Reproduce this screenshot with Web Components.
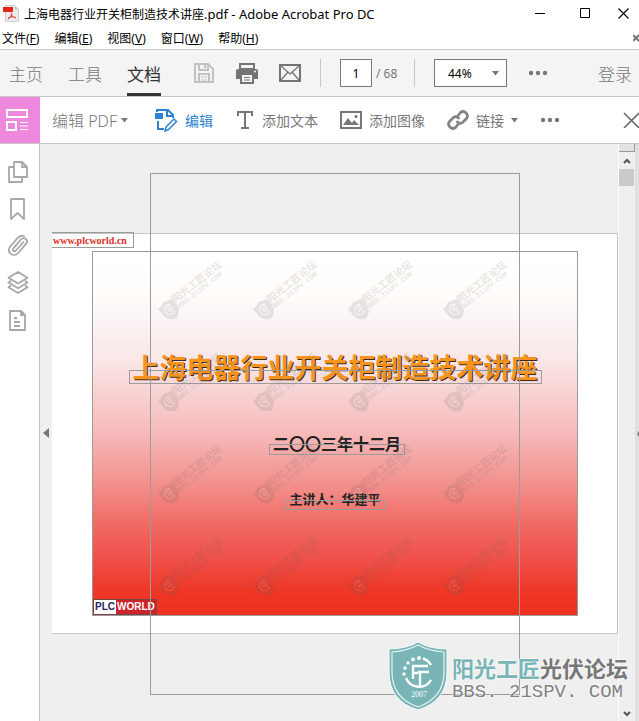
<!DOCTYPE html>
<html lang="zh-CN">
<head>
<meta charset="utf-8">
<title>上海电器行业开关柜制造技术讲座.pdf - Adobe Acrobat Pro DC</title>
<style>
html,body{margin:0;height:100%}
body{font-family:"Noto Sans","Noto Sans CJK SC",sans-serif;font-size:12px;color:#000;background:#fff;overflow:hidden}
</style>
</head>
<body>
<acro-app></acro-app>
<script>
const base = `<style>
*{box-sizing:border-box}
button,input,select{font:inherit;color:inherit;background:none;border:0;padding:0;margin:0;border-radius:0}
button{display:flex;align-items:center;white-space:nowrap;flex:none}
svg{display:block;flex:none}
</style>`;
function define(name, html){
  const t = document.createElement('template');
  t.innerHTML = base + html;
  customElements.define(name, class extends HTMLElement{
    constructor(){ super(); this.attachShadow({mode:'open'}).append(t.content.cloneNode(true)); }
  });
}

define('title-bar', `<style>
:host{display:flex;align-items:center;height:27px;padding-left:3px;flex:none}
h1{font:inherit;margin:0;padding-left:5px;flex:1;white-space:nowrap;overflow:hidden}
h1 span{font-size:13px}
button{width:45px;height:27px;justify-content:center;flex:none}
button:last-child{width:31px}
</style>
<svg width="16" height="17" viewBox="0 0 16 17"><path d="M2.5.5h9l4 4v12h-13z" fill="#ececec" stroke="#cfcfcf"/><path d="M11.500 .5v4h4z" fill="#c4c4c4"/><path d="M0 2h10v5H0z" fill="#e2231a"/><path d="M5 14c3-2 4-4 3.500-6M8 8.500c.5 2.500 2.500 4 5 4.500M5.500 13c2.500-1.500 5-1.500 7-.5" fill="none" stroke="#e2463e" stroke-width="1.200"/></svg>
<h1>上海电器行业开关柜制造技术讲座<span>.pdf - Adobe Acrobat Pro DC</span></h1>
<button aria-label="最小化"><svg width="11" height="11"><path d="M0 5.500h10" stroke="#000"/></svg></button>
<button aria-label="最大化"><svg width="11" height="11"><path d="M.5.5h9v9h-9z" fill="none" stroke="#000"/></svg></button>
<button aria-label="关闭"><svg width="11" height="11"><path d="M.5.5l10 10M10.500.5l-10 10" stroke="#000" stroke-width="1.100"/></svg></button>`);

define('menu-bar', `<style>
:host{display:flex;align-items:center;height:22px;flex:none;padding-left:2px;gap:15px}
.x{margin-left:auto}
</style>
<button>文件(<u>F</u>)</button><button>编辑(<u>E</u>)</button><button>视图(<u>V</u>)</button><button>窗口(<u>W</u>)</button><button>帮助(<u>H</u>)</button>
<button class="x" aria-label="关闭文档"><svg width="6" height="8"><path d="M0 1l6 6M6 1L0 7" stroke="#777" stroke-width="2"/></svg></button>`);

define('main-toolbar', `<style>
:host{display:flex;align-items:center;height:48px;flex:none;background:#f4f4f4;border:solid #c8c8c8;border-width:1px 0;color:#777;padding:0 7px 0 9px}
.tabs{display:flex;gap:25px;align-self:stretch}
.tabs button,.login{font-size:17px;font-weight:300}
.tabs .on{color:#333;font-weight:400;border-bottom:3px solid #333;padding-top:3px}
.icons{display:flex;gap:21px;padding-left:32px}
i{width:1px;height:28px;background:#c8c8c8;margin:0 19px}
input{width:32px;height:28px;border:1px solid #777;background:#fff;color:#000;text-align:center}
.of{padding-left:4px;width:23px;white-space:nowrap}
.zoom{position:relative;display:flex;align-items:center;height:28px}
select{appearance:none;width:73px;height:28px;border:1px solid #777;background:#fff;color:#000;padding-left:13px}
.zoom svg{position:absolute;right:8px;pointer-events:none}
.more{margin-left:21px}.login{margin-left:auto}
</style>
<nav class="tabs"><button>主页</button><button>工具</button><button class="on">文档</button></nav>
<div class="icons">
<button aria-label="保存"><svg width="22" height="22" viewBox="0 0 22 22" fill="none" stroke="#c2c2c2" stroke-width="2"><path d="M2 2h13l5 5v13H2z"/><path d="M6 2v6h9V2M6 20v-8h10v8"/><path d="M8 15h6M8 18h6" stroke-width="1"/><path d="M12 3v3"/></svg></button>
<button aria-label="打印"><svg width="22" height="22" viewBox="0 0 22 22"><path d="M4 2h14v5H4z" fill="none" stroke="#747474" stroke-width="2"/><path d="M2 7h18a2 2 0 0 1 2 2v8H0V9a2 2 0 0 1 2-2z" fill="#747474"/><path d="M5 12h12v9H5z" fill="#f4f4f4" stroke="#747474" stroke-width="2"/><path d="M8 15.500h6M8 18h6" stroke="#747474"/><circle cx="19" cy="9.500" r="1" fill="#f4f4f4"/></svg></button>
<button aria-label="邮件"><svg width="22" height="18" viewBox="0 0 22 18" fill="none" stroke="#747474"><path d="M1 1h20v16H1z" stroke-width="2"/><path d="M2 2l9 8 9-8M2 16l7-8M20 16l-7-8" stroke-width="1.300"/></svg></button>
</div>
<i></i><input aria-label="页码" value="1"><span class="of">/ 68</span><i></i>
<label class="zoom"><select aria-label="缩放"><option>44%</option></select><svg width="7" height="5"><path d="M0 0h7L3.500 4.500z" fill="#777"/></svg></label>
<button class="more" aria-label="更多"><svg width="20" height="6" fill="#777"><circle cx="3" cy="3" r="2.200"/><circle cx="10" cy="3" r="2.200"/><circle cx="17" cy="3" r="2.200"/></svg></button>
<button class="login">登录</button>`);

define('edit-toolbar', `<style>
:host{display:flex;align-items:center;height:47px;flex:none;border-bottom:1px solid #c8c8c8;color:#777;font-size:14px;overflow:hidden}
.badge{width:40px;align-self:stretch;background:#ed88dc;padding-left:6px}
.name{font-size:16px;font-weight:300;gap:4px;padding-left:12px;width:103px}
.tools{display:flex;gap:22px;padding-left:11px}
.tools button{gap:7px}
.edit{color:#2b83d2}.x{margin-left:auto}
</style>
<button class="badge" aria-label="编辑面板"><svg width="22" height="22" viewBox="0 0 22 22" fill="none" stroke="#fff" stroke-width="2"><path d="M1 1h20v7H1zM1 13h9v8H1z"/><path d="M14 13.500h8M14 17h8M14 20.500h8" stroke-width="1.200"/></svg></button>
<button class="name">编辑 PDF<svg width="7" height="5"><path d="M0 0h7L3.500 4.500z" fill="#777"/></svg></button>
<div class="tools">
<button class="edit"><svg width="24" height="24" viewBox="0 0 24 24" fill="none" stroke="#2b83d2" stroke-width="2"><path d="M3 4V2h11l5 5v3M13 2v6h6M4 13v8h6"/><path d="M1 5h8v6H1z" fill="#2b83d2" stroke="none"/><path d="M12 19l8-8 2.500 2.500-8 8L11 23z" stroke-width="1.500"/></svg>编辑</button>
<button><svg width="20" height="20" viewBox="0 0 20 20" fill="none" stroke="#777" stroke-width="2"><path d="M3 6V2h14v4M10 2v16M6 18h8"/></svg>添加文本</button>
<button><svg width="22" height="18" viewBox="0 0 22 18"><path d="M1 1h20v16H1z" fill="none" stroke="#777" stroke-width="2"/><path d="M3 14l5-7 4 5 2-3 5 5z" fill="#777"/><circle cx="16" cy="5.500" r="1.500" fill="#777"/></svg>添加图像</button>
<button><svg width="22" height="22" viewBox="0 0 22 22" fill="none" stroke="#858585" stroke-width="2.800" stroke-linecap="round"><path d="M10 8l3.500-4.500a4.300 4.300 0 0 1 6 6l-4 4c-1.500 1.200-4 1-5-.5M12 14l-3.500 4.500a4.300 4.300 0 0 1-6-6l4-4c1.500-1.200 4-1 5 .5"/></svg>链接<svg width="7" height="5"><path d="M0 0h7L3.500 4.500z" fill="#777"/></svg></button>
<button aria-label="更多"><svg width="20" height="6" fill="#777"><circle cx="3" cy="3" r="2.200"/><circle cx="10" cy="3" r="2.200"/><circle cx="17" cy="3" r="2.200"/></svg></button>
</div>
<button class="x" aria-label="关闭"><svg width="16" height="16"><path d="M1 1l15 15M16 1L1 16" stroke="#6b6b6b" stroke-width="1.600"/></svg></button>`);

define('side-rail', `<style>
:host{display:flex;flex-direction:column;align-items:center;gap:13px;width:40px;flex:none;background:#fff;border-right:1px solid #c0c0c0;padding:16px 4px 0 0}
svg{fill:none;stroke:#a8a8a8;stroke-width:1.800;stroke-linejoin:round}
</style>
<button aria-label="页面缩略图"><svg width="24" height="24" viewBox="0 0 24 24"><path d="M8 2h8l5 5v10H8zM16 2v5h5M8 7H3v15h13v-5"/></svg></button>
<button aria-label="书签"><svg width="24" height="24" viewBox="0 0 24 24"><path d="M5 2h13v20l-6.500-6L5 22z"/></svg></button>
<button aria-label="附件"><svg width="24" height="24" viewBox="0 0 24 24"><path d="M17.500 8l-7.500 8.500c-1.800 1.800-4.200-.2-2.600-2.200l7.400-8.600c3.500-3.500 8 .2 5.400 4l-8 9.300c-4.500 5-12.200-.5-8-6.500l7.300-8.300c2-2.200 4-3 6.500-2.200" stroke-linecap="round"/></svg></button>
<button aria-label="图层"><svg width="24" height="24" viewBox="0 0 24 24"><path d="M12 1l9.500 5.700-9.500 5.700-9.500-5.700zM5 9.800l-2.500 1.700 9.500 5.700 9.500-5.700L19 9.800M5 14.600l-2.500 1.700L12 22l9.500-5.700-2.500-1.700"/></svg></button>
<button aria-label="内容"><svg width="24" height="24" viewBox="0 0 24 24"><path d="M4 3h11l4 4v15H4zM15 3v4h4M8 10h3M8 14h6M8 18h6"/></svg></button>`);

define('water-mark', `<style>
:host{display:block;position:relative;color:#5a5a5a;opacity:.14;font-family:"Noto Sans CJK SC",sans-serif;height:60px}
svg{position:absolute;left:0;top:34px;transform:rotate(-38deg)}
div{position:absolute;left:22px;top:26px;transform:rotate(-38deg);transform-origin:0 100%;font-size:10px;line-height:12px;font-weight:700;white-space:nowrap}
small{display:block;font:700 7px/7px "Liberation Mono",monospace}
</style>
<svg width="22" height="22" viewBox="0 0 58 68"><path d="M2 9q16 0 27-7 11 7 27 7v22q0 26-27 35Q2 57 2 31z" fill="#5a5a5a"/><path d="M40 20a16 16 0 1 0 0 24M24 24h15M25 26v13M33 32v12M27 32h12" fill="none" stroke="#fff" stroke-width="3"/></svg>
<div>阳光工匠论坛<small>BBS.21SPV.COM</small></div>`);

define('slide-page', `<style>
:host{display:block;position:relative;background:#fff;border:solid #c4c4c4;border-width:1px 1px 1px 0;padding:17px 39px 17px 40px}
.url{position:absolute;left:0;top:-2px;height:16px;width:82px;border:1px solid #9b9b9b;border-left:0;color:#e0301e;font:700 10px/15px "Liberation Serif",serif;padding-left:1px;white-space:nowrap}
.slide{position:relative;display:flex;flex-direction:column;align-items:center;aspect-ratio:486/365;border:1px solid #9b9b9b;overflow:hidden;background:linear-gradient(#fffffd 0,#fffdfa 11%,#fbf3f3 20%,#fae6e6 30%,#f8d4d4 38%,#f6bcbc 49%,#f3908c 64%,#f16a64 75%,#ef4f48 85%,#ee3826 93%,#ee2f20 100%);font-family:"Noto Sans CJK SC",sans-serif;font-weight:700;color:#222;padding-top:95px}
h2,p{margin:0;position:relative;white-space:nowrap}
h2{font-size:27px;line-height:40px;color:#f7941d;text-shadow:1px 1px #3a2a1c}
.date{font-size:16px;line-height:24px;margin:44px 0 0 4px}
.who{font-size:13px;line-height:20px;margin-top:34px}
h2::after,p::after{content:"";position:absolute;left:-4px;right:-4px;border:1px solid #9b9b9b}
h2::after{top:23px;height:12px}
p::after{top:13px;height:9px}
.who::after{top:11px;height:8px}
.marks{position:absolute;inset:13px 30px auto 66px;display:grid;grid-template-columns:repeat(4,95px);gap:32px 0}
.plc{position:absolute;left:0;bottom:0;display:flex;border:1px solid #7d4444;font:700 10px/14px "Liberation Sans",sans-serif}
.plc b{background:#fff;color:#262262;padding:0 1px}
.plc b+b{background:#c9252b;color:#fff}
</style>
<div class="slide">
<h2>上海电器行业开关柜制造技术讲座</h2>
<p class="date">二〇〇三年十二月</p>
<p class="who">主讲人：华建平</p>
<div class="marks">${'<water-mark></water-mark>'.repeat(16)}</div>
<div class="plc"><b>PLC</b><b>WORLD</b></div>
</div>
<div class="url">www.plcworld.cn</div>`);

define('site-logo', `<style>
:host{display:flex;align-items:center;gap:4px;font-family:"Noto Sans CJK SC",sans-serif;white-space:nowrap}
.n{font-size:22px;line-height:32px;font-weight:700;color:#777;text-shadow:0 0 2px #fff,0 0 2px #fff}
.n span{color:#79b4b6}
.u{font:19px/18px "Liberation Mono",monospace;color:#808080;text-shadow:0 0 2px #fff,0 0 2px #fff}
</style>
<svg width="60" height="70" viewBox="-1 -1 60 70"><path d="M0 7q17 0 29-7 12 7 29 7v23q0 29-29 38Q0 59 0 30z" fill="#79b4b6" stroke="#f8fcfc"/><path d="M3 10q15-1 26-7 11 6 26 7v20q0 26-26 35Q3 56 3 30z" fill="none" stroke="#e6f4f4" stroke-width="1.200"/><path d="M34 16.500A14 14 0 0 1 42 23M17 36a14 14 0 0 0 25 2M23 24h16M24 24v13M29 30h11M31 30v14M23 31h6" fill="none" stroke="#fff" stroke-width="2.400"/><g fill="#fff"><circle cx="15" cy="32" r="1.700"/><circle cx="16" cy="26" r="1.700"/><circle cx="19" cy="21" r="1.700"/><circle cx="24" cy="17.500" r="1.900"/><circle cx="30" cy="16" r="2"/></g><text x="30" y="55" text-anchor="middle" font-family="Liberation Serif,serif" font-size="8" fill="#fff">2007</text></svg>
<div><div class="n"><span>阳光工匠</span>光伏论坛</div><div class="u">BBS.&nbsp;21SPV.&nbsp;COM</div></div>`);

define('doc-canvas', `<style>
:host{display:block;position:relative;flex:1;min-width:0;background:#efefef;padding-top:89px;overflow:hidden}
.frame{position:absolute;left:98px;top:29px;width:370px;height:522px;border:1px solid #9b9b9b;pointer-events:none}
</style>
<slide-page></slide-page><div class="frame"></div>`);

define('scroll-rail', `<style>
:host{display:flex;flex-direction:column;width:21px;flex:none;background:#efefef;border-left:1px solid #fff;border-right:4px solid #e0e0e0}
.split{height:8px;border:solid #999;border-width:0 1px 1px 0;background:#e3e3e3}
button{height:17px;justify-content:center}
.thumb{height:17px;background:#cacaca;margin-right:1px}
.end{margin-top:auto;height:14px}
</style>
<div class="split"></div>
<button aria-label="向上"><svg width="8" height="6"><path d="M1 5l3-3 3 3" fill="none" stroke="#555" stroke-width="2"/></svg></button>
<div class="thumb"></div>
<button class="end" aria-label="向下"><svg width="8" height="6"><path d="M1 1l3 3 3-3" fill="none" stroke="#555" stroke-width="2"/></svg></button>`);

define('acro-app', `<style>
:host{display:flex;flex-direction:column;height:100vh;position:relative;overflow:hidden}
main{display:flex;flex:1;min-height:0;position:relative}
.fold{width:12px;background:#efefef;justify-content:center;flex:none}
site-logo{position:absolute;right:11px;bottom:10px}
.fold2{position:absolute;right:0;top:285px}
</style>
<title-bar></title-bar><menu-bar></menu-bar><main-toolbar></main-toolbar><edit-toolbar></edit-toolbar>
<main><side-rail></side-rail>
<button class="fold" aria-label="折叠导航窗格"><svg width="6" height="10"><path d="M6 0v10L0 5z" fill="#777"/></svg></button>
<doc-canvas></doc-canvas><scroll-rail></scroll-rail>
<svg class="fold2" width="2" height="10"><path d="M2 2v6L0 5z" fill="#777"/></svg>
<site-logo></site-logo></main>`);
</script>
</body>
</html>
